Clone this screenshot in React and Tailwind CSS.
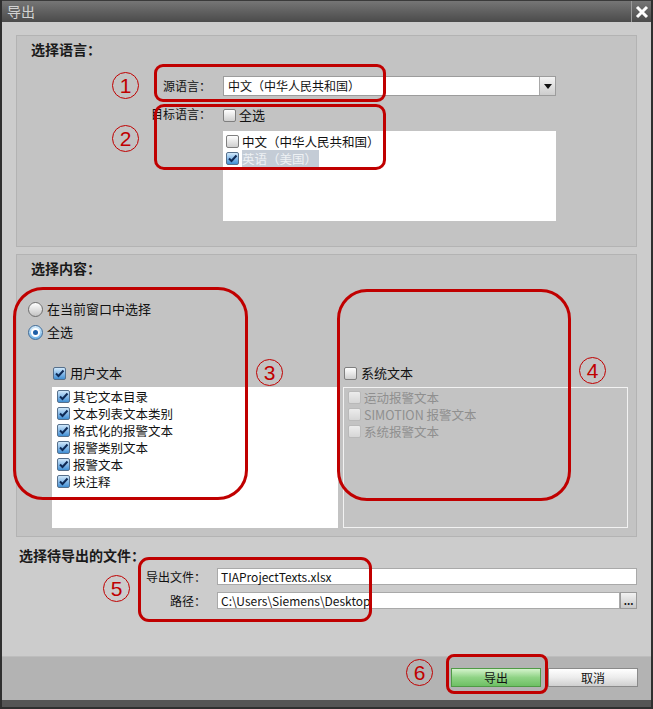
import React from "react";

function Check({ checked, disabled }) {
  if (disabled) {
    return (
      <span className="inline-block w-[13px] h-[13px] shrink-0 rounded-[2px] border border-[#b9b9b9] bg-linear-to-b from-[#ececec] to-[#d6d6d6]" />
    );
  }
  if (checked) {
    return (
      <span className="relative inline-flex w-[13px] h-[13px] shrink-0 items-center justify-center rounded-[2px] border border-[#56708c] bg-linear-to-b from-[#cfe8fb] to-[#3f8fd4]">
        <svg width="11" height="11" viewBox="0 0 11 11">
          <path d="M2 5.5 L4.5 8 L9.5 2.5" fill="none" stroke="#0e2a56" strokeWidth="2" />
        </svg>
      </span>
    );
  }
  return (
    <span className="inline-block w-[13px] h-[13px] shrink-0 rounded-[2px] border border-[#7f7f7f] bg-linear-to-b from-white to-[#cfcfcf]" />
  );
}

function Radio({ checked }) {
  if (checked) {
    return (
      <span className="inline-flex w-[15px] h-[15px] shrink-0 items-center justify-center rounded-full border border-[#3f6c99] bg-linear-to-b from-[#d9eefc] to-[#6eb2e6]">
        <span className="flex w-[9px] h-[9px] items-center justify-center rounded-full bg-white">
          <span className="w-[5px] h-[5px] rounded-full bg-[#1d5ea6]" />
        </span>
      </span>
    );
  }
  return (
    <span className="inline-block w-[15px] h-[15px] shrink-0 rounded-full border border-[#6e6e6e] bg-linear-to-b from-white to-[#c4c4c4]" />
  );
}

function Item({ checked, disabled, children }) {
  return (
    <div className={`flex items-center h-[17px] gap-[3px] text-[12.5px] ${disabled ? "text-[#8f8f8f]" : "text-[#111]"}`}>
      <Check checked={checked} disabled={disabled} />
      <span className="block h-[17px] leading-[17px] overflow-hidden whitespace-nowrap">{children}</span>
    </div>
  );
}

// rote Markierungen über dem Dialog
function Mark({ className }) {
  return <div className={`absolute border-[3px] border-[#c00000] pointer-events-none ${className}`} />;
}

function Num({ n, className }) {
  return (
    <div
      className={`absolute w-[27px] h-[27px] rounded-full border-[1.5px] border-[#c00000] text-[#c00000] text-[21px] leading-none flex items-center justify-center font-['Liberation_Sans',sans-serif] ${className}`}
    >
      {n}
    </div>
  );
}

export default function App() {
  return (
    <div className="relative w-[653px] h-[709px] bg-[#cccccc] border-x-2 border-[#2f2f2f] flex flex-col overflow-hidden text-[12px] text-[#111] font-['Noto_Sans_CJK_SC',sans-serif]">
      {/* Titelleiste */}
      <div className="h-[22px] shrink-0 flex items-stretch justify-between bg-linear-to-b from-[#767676] to-[#4b4b4b] border-t border-[#3a3a3a]">
        <span className="pl-[5px] text-[14px] leading-[21px] text-[#d2d2d2]">导出</span>
        <div className="w-[20px] flex items-center justify-center border-l border-[#9a9a9a]">
          <svg width="14" height="14" viewBox="0 0 14 14">
            <path d="M2 2 L12 12 M12 2 L2 12" stroke="white" strokeWidth="3" />
          </svg>
        </div>
      </div>

      <div className="flex-1 flex flex-col px-[14px] pt-[13px]">
        {/* 选择语言 */}
        <section className="h-[212px] shrink-0 bg-[#c3c3c3] border border-[#b3b3b3] pt-[3px]">
          <h2 className="pl-[14px] h-[20px] leading-[20px] text-[14px] font-bold text-[#1a1a1a]">选择语言：</h2>
          <div className="mt-[17px] flex items-center h-[20px]">
            <span className="w-[194px] text-right">源语言：</span>
            <div className="ml-[12px] w-[333px] h-[20px] flex bg-white border border-[#9c9c9c]">
              <span className="flex-1 pl-[4px] leading-[18px]">中文（中华人民共和国）</span>
              <div className="w-[16px] flex items-center justify-center border-l border-[#a8a8a8] bg-linear-to-b from-[#f4f4f4] to-[#cdcdcd]">
                <svg width="8" height="5" viewBox="0 0 8 5">
                  <path d="M0 0 H8 L4 5 Z" fill="#111" />
                </svg>
              </div>
            </div>
          </div>
          <div className="mt-[10px] flex items-center h-[18px]">
            <span className="w-[194px] text-right -mt-[3px] leading-[16px]">目标语言：</span>
            <div className="ml-[12px] flex items-center gap-[3px] text-[13px] leading-[16px]">
              <Check />
              <span>全选</span>
            </div>
          </div>
          <div className="mt-[7px] ml-[206px] w-[333px] h-[90px] bg-white pt-[2px] pl-[3px]">
            <Item>中文（中华人民共和国）</Item>
            <div className="flex items-center h-[17px] gap-[3px] text-[12.5px]">
              <Check checked />
              <span className="block h-[17px] leading-[17px] bg-[#c4ccd6] text-[#eef1f4] pr-[2px]">英语（美国）</span>
            </div>
          </div>
        </section>

        {/* 选择内容 */}
        <section className="mt-[7px] h-[283px] shrink-0 bg-[#c3c3c3] border border-[#b3b3b3] pt-[3px]">
          <h2 className="pl-[14px] h-[20px] leading-[20px] text-[14px] font-bold text-[#1a1a1a]">选择内容：</h2>
          <div className="pl-[11px] mt-[21px] flex flex-col gap-[3px] text-[13px] leading-[18px]">
            <div className="flex items-center h-[20px] gap-[4px]">
              <Radio />
              <span>在当前窗口中选择</span>
            </div>
            <div className="flex items-center h-[20px] gap-[4px]">
              <Radio checked />
              <span>全选</span>
            </div>
          </div>
          <div className="mt-[22px] pl-[35px] flex gap-[5px] text-[13px] leading-[16px]">
            <div className="w-[286px]">
              <div className="flex items-center h-[18px] gap-[4px] pl-[1px]">
                <Check checked />
                <span>用户文本</span>
              </div>
              <div className="mt-[5px] h-[141px] bg-white pt-[1px] pl-[5px]">
                <Item checked>其它文本目录</Item>
                <Item checked>文本列表文本类别</Item>
                <Item checked>格式化的报警文本</Item>
                <Item checked>报警类别文本</Item>
                <Item checked>报警文本</Item>
                <Item checked>块注释</Item>
              </div>
            </div>
            <div className="w-[285px]">
              <div className="flex items-center h-[18px] gap-[4px] pl-[1px]">
                <Check />
                <span>系统文本</span>
              </div>
              <div className="mt-[5px] h-[141px] border border-[#f2f2f2] pt-[1px] pl-[4px]">
                <Item disabled>运动报警文本</Item>
                <Item disabled>SIMOTION 报警文本</Item>
                <Item disabled>系统报警文本</Item>
              </div>
            </div>
          </div>
        </section>

        {/* 选择待导出的文件 */}
        <h2 className="mt-[8px] pl-[3px] h-[20px] leading-[20px] text-[14px] font-bold text-[#1a1a1a]">选择待导出的文件：</h2>
        <div className="mt-[3px] flex items-center h-[17px] leading-[15px]">
          <span className="w-[190px] text-right">导出文件：</span>
          <div className="ml-[11px] flex-1 h-[17px] bg-white border border-[#a9a9a9] pl-[3px]">TIAProjectTexts.xlsx</div>
        </div>
        <div className="mt-[7px] flex items-center h-[17px] leading-[15px]">
          <span className="w-[190px] text-right">路径：</span>
          <div className="ml-[11px] flex-1 h-[17px] bg-white border border-[#a9a9a9] pl-[3px]">C:\Users\Siemens\Desktop</div>
          <div className="w-[17px] h-[17px] flex items-end justify-center pb-[2px] border border-[#9a9a9a] bg-linear-to-b from-[#f2f2f2] to-[#c8c8c8] text-[10px] leading-none font-bold">
            ...
          </div>
        </div>
      </div>

      {/* Fußleiste */}
      <div className="h-[44px] shrink-0 bg-[#b3b3b3] border-t border-[#bdbdbd] flex justify-end items-start pt-[11px] pr-[13px] gap-[7px]">
        <button className="w-[90px] h-[19px] border border-[#4f9a46] bg-linear-to-b from-[#d4f3cc] via-[#8fd385] to-[#6ec064] text-[12px] leading-[17px] text-[#111]">
          导出
        </button>
        <button className="w-[90px] h-[19px] border border-[#8a8a8a] bg-linear-to-b from-white via-[#ececec] to-[#cfcfcf] text-[12px] leading-[17px] text-[#111]">
          取消
        </button>
      </div>
      <div className="h-[9px] shrink-0 bg-[#555555] border-b-2 border-[#2f2f2f]" />

      {/* Markierungen */}
      <Mark className="left-[152px] top-[64px] w-[232px] h-[38px] rounded-[9px]" />
      <Mark className="left-[152px] top-[104px] w-[232px] h-[66px] rounded-[10px]" />
      <Mark className="left-[11px] top-[287px] w-[235px] h-[213px] rounded-[30px]" />
      <Mark className="left-[335px] top-[289px] w-[234px] h-[212px] rounded-[30px]" />
      <Mark className="left-[136px] top-[557px] w-[234px] h-[65px] rounded-[11px]" />
      <Mark className="left-[444px] top-[654px] w-[102px] h-[40px] rounded-[8px]" />
      <Num n="1" className="left-[110px] top-[72px]" />
      <Num n="2" className="left-[110px] top-[125px]" />
      <Num n="3" className="left-[254px] top-[359px]" />
      <Num n="4" className="left-[577px] top-[357px]" />
      <Num n="5" className="left-[101px] top-[575px]" />
      <Num n="6" className="left-[404px] top-[659px]" />
    </div>
  );
}
